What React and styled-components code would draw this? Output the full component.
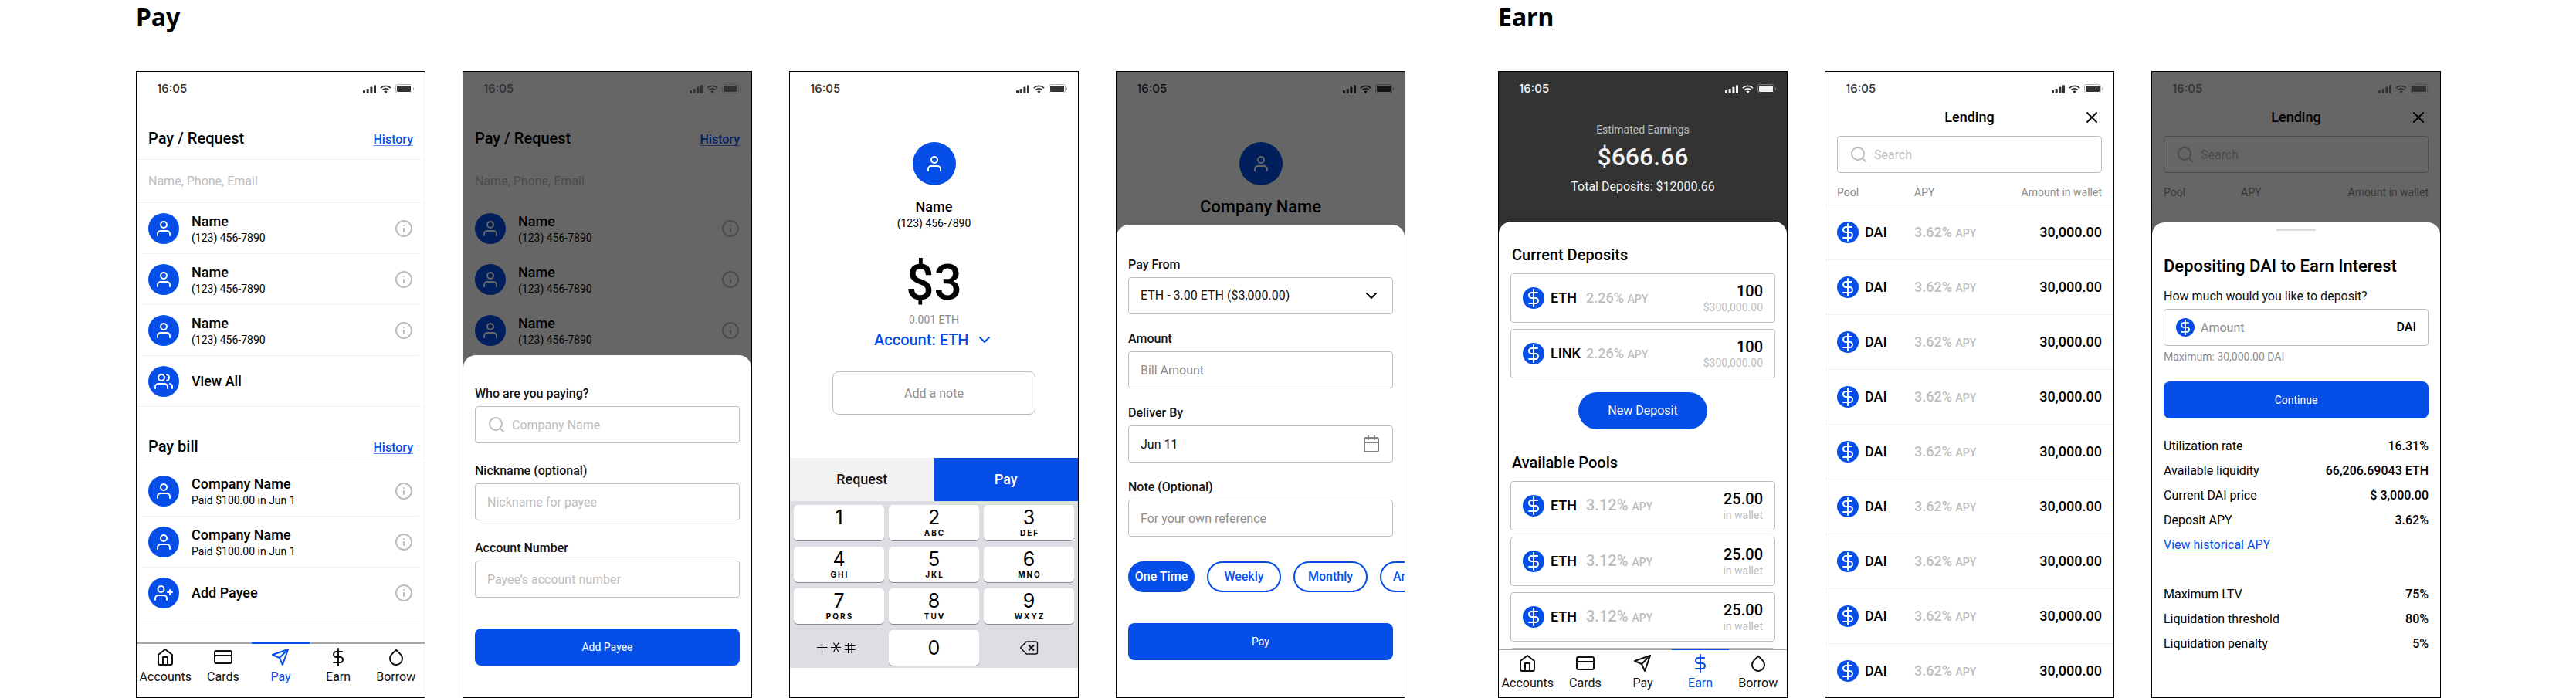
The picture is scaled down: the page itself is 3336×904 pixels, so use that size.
import React, { useId } from "react";
import styled, { createGlobalStyle } from "styled-components";
import {
  FiCalendar,
  FiChevronDown,
  FiCreditCard,
  FiDollarSign,
  FiDroplet,
  FiHome,
  FiInfo,
  FiSearch,
  FiSend,
  FiUser,
  FiUserPlus,
  FiUsers,
  FiX,
} from "react-icons/fi";

const blue = "#054ee8";
const ink = "#111111";
const grey = "#8c8c8c";
const pale = "#bdbdbd";
const hair = "#f2f2f2";

const GlobalStyle = createGlobalStyle`
  *, *::before, *::after { box-sizing: border-box; }
  body { margin: 0; background: #ffffff; color: #000000; font-family: Roboto, "Liberation Sans", sans-serif; font-size: 16px; line-height: 20px; }
  h1, h2, h3, p, ul, dl, dd { margin: 0; padding: 0; }
  ul { list-style: none; }
  button, input, select { font: inherit; color: inherit; margin: 0; }
  button { border: 0; padding: 0; background: none; cursor: pointer; }
  svg { display: block; flex: none; }
`;

/* ---------- board ---------- */

const Board = styled.main`
  display: flex;
  gap: 120px;
  padding: 0 175px 0 176px;
`;

const Flow = styled.section`
  display: flex;
  flex-direction: column;
  flex: ${(p) => `${p.$count} ${p.$count} ${(p.$count - 1) * 48}px`};
  min-width: 0;
`;

const FlowTitle = styled.h1`
  margin-bottom: 48px;
  font-family: "Noto Sans", "Open Sans", sans-serif;
  font-size: 32px;
  font-weight: 700;
  line-height: 44px;
`;

const Screens = styled.div`
  display: flex;
  gap: 48px;
  flex: 1;
`;

const Phone = styled.article`
  position: relative;
  display: flex;
  flex-direction: column;
  flex: 1 1 0;
  min-width: 0;
  min-height: 812px;
  overflow: hidden;
  border: 1px solid #000000;
  background: ${(p) => (p.$dark ? "#333333" : "#ffffff")};
`;

/* ---------- status bar ---------- */

const StatusRow = styled.div`
  position: relative;
  z-index: ${(p) => (p.$raised ? 2 : 0)};
  display: flex;
  flex: none;
  align-items: center;
  justify-content: space-between;
  height: 44px;
  padding: 0 14px 0 26px;
  color: ${(p) => (p.$light ? "#f2f2f2" : "#333333")};
  font-family: Inter, sans-serif;
  font-size: 15px;
  font-weight: 500;
`;

const StatusIcons = styled.div`
  display: flex;
  align-items: center;
  gap: 5px;
`;

function StatusBar({ light, raised }) {
  return (
    <StatusRow $light={light} $raised={raised}>
      <time>16:05</time>
      <StatusIcons aria-hidden="true">
        <svg width="17" height="11" viewBox="0 0 17 11" fill="currentColor">
          <rect x="0" y="7" width="3" height="4" rx="0.8" />
          <rect x="4.7" y="5" width="3" height="6" rx="0.8" />
          <rect x="9.4" y="2.6" width="3" height="8.4" rx="0.8" />
          <rect x="14" y="0.2" width="3" height="10.8" rx="0.8" />
        </svg>
        <svg width="15" height="11" viewBox="0 0 15 11" fill="none" stroke="currentColor" strokeWidth="1.9">
          <path d="M0.9 4.1a9.4 9.4 0 0 1 13.2 0" />
          <path d="M3.3 6.6a6 6 0 0 1 8.4 0" />
          <path d="M5.2 8.6a3.4 3.4 0 0 1 4.6 0L7.5 11z" fill="currentColor" stroke="none" />
        </svg>
        <svg width="24" height="12" viewBox="0 0 24 12" fill="none">
          <rect x="0.5" y="0.5" width="21" height="11" rx="2.6" stroke="currentColor" opacity="0.35" />
          <rect x="2" y="2" width="18" height="8" rx="1.2" fill="currentColor" />
          <path d="M23 4.2v3.8c.8-.3 1.2-1 1.2-1.9S23.800 4.500 23 4.200" fill="currentColor" opacity="0.4" />
        </svg>
      </StatusIcons>
    </StatusRow>
  );
}

/* ---------- shared pieces ---------- */

const Avatar = styled.span`
  display: flex;
  flex: none;
  align-items: center;
  justify-content: center;
  width: ${(p) => (p.$large ? 56 : 40)}px;
  height: ${(p) => (p.$large ? 56 : 40)}px;
  border-radius: 50%;
  background: ${blue};
  color: #ffffff;
`;

const Coin = styled.span`
  display: flex;
  flex: none;
  align-items: center;
  justify-content: center;
  width: ${(p) => p.$size}px;
  height: ${(p) => p.$size}px;
  border-radius: 50%;
  background: ${blue};
  color: #ffffff;
`;

function Token({ size = 28 }) {
  return (
    <Coin $size={size}>
      <FiDollarSign size={size - 4} />
    </Coin>
  );
}

const TextLink = styled.a`
  color: ${blue};
  font-weight: ${(p) => (p.$strong ? 500 : 400)};
  text-decoration: underline 1px #5f8ff5;
  text-decoration-skip-ink: none;
  text-underline-offset: 2px;
`;

const Scrim = styled.div`
  position: absolute;
  inset: 0;
  z-index: 1;
  background: rgba(0, 0, 0, 0.6);
`;

const ModalSheet = styled.form`
  position: absolute;
  right: 0;
  bottom: 0;
  left: 0;
  z-index: 3;
  display: flex;
  flex-direction: column;
  padding: ${(p) => p.$pad};
  border-radius: 16px 16px 0 0;
  background: #ffffff;
`;

const Fields = styled.div`
  display: flex;
  flex-direction: column;
  gap: ${(p) => p.$gap}px;
`;

const FieldGroup = styled.div`
  display: flex;
  flex-direction: column;
  gap: 6px;
`;

const Label = styled.label`
  color: ${ink};
  font-weight: ${(p) => (p.$plain ? 400 : 500)};
`;

const FieldBox = styled.div`
  position: relative;
  display: flex;
  flex: none;
  align-items: center;
  gap: 8px;
  height: 48px;
  padding: 0 15px;
  border: 1px solid ${pale};
  border-radius: 4px;
  color: ${(p) => p.$tone || pale};
`;

const Input = styled.input`
  flex: 1;
  width: 100%;
  min-width: 0;
  height: 24px;
  padding: 0;
  border: 0;
  outline: 0;
  background: transparent;
  color: ${ink};
  text-align: ${(p) => (p.$center ? "center" : "left")};
  &::placeholder {
    color: ${(p) => (p.$strong ? grey : pale)};
    opacity: 1;
  }
`;

const Select = styled.select`
  flex: ${(p) => (p.$inline ? "none" : 1)};
  min-width: 0;
  padding: 0;
  border: 0;
  outline: 0;
  appearance: none;
  background: transparent;
`;

const PrimaryButton = styled.button`
  flex: none;
  height: 48px;
  margin-top: ${(p) => p.$gap}px;
  border-radius: 8px;
  background: ${blue};
  color: #ffffff;
  font-size: 14px;
`;

function Field({ label, icon, trailing, ...input }) {
  const id = useId();
  return (
    <FieldGroup>
      <Label htmlFor={id}>{label}</Label>
      <FieldBox $tone={trailing ? "#808080" : pale}>
        {icon}
        <Input id={id} type="text" {...input} />
        {trailing}
      </FieldBox>
    </FieldGroup>
  );
}

/* ---------- bottom navigation ---------- */

const NavBar = styled.nav`
  display: grid;
  flex: none;
  grid-template-columns: repeat(5, 1fr);
  margin-top: auto;
  background: #ffffff;
`;

const NavItem = styled.a`
  display: flex;
  flex-direction: column;
  align-items: center;
  gap: 4px;
  min-width: 0;
  padding: 5px 0 ${(p) => (p.$compact ? 8 : 16)}px;
  border-top: 2px solid ${(p) => (p.$active ? blue : "#a6a6a6")};
  color: ${(p) => (p.$active ? blue : ink)};
  text-decoration: none;
`;

const tabs = [
  ["Accounts", FiHome],
  ["Cards", FiCreditCard],
  ["Pay", FiSend],
  ["Earn", FiDollarSign],
  ["Borrow", FiDroplet],
];

function Navigation({ current, compact }) {
  return (
    <NavBar aria-label="Main">
      {tabs.map(([name, Icon]) => (
        <NavItem key={name} href={`#${name}`} $active={name === current} $compact={compact}>
          <Icon size={24} />
          <span>{name}</span>
        </NavItem>
      ))}
    </NavBar>
  );
}

/* ---------- pay: contacts ---------- */

const SectionHead = styled.header`
  display: flex;
  align-items: baseline;
  justify-content: space-between;
  padding: ${(p) => (p.$tight ? "39px 15px 9px" : "30px 15px 15px")};
  border-bottom: 1px solid ${hair};
`;

const SectionTitle = styled.h2`
  font-size: 20px;
  font-weight: 500;
  line-height: 24px;
`;

const ContactSearch = styled.div`
  display: flex;
  align-items: center;
  height: 56px;
  padding: 0 15px;
  border-bottom: 1px solid ${hair};
`;

const ContactList = styled.ul`
  padding-top: ${(p) => (p.$spaced ? 3 : 0)}px;
`;

const ContactRow = styled.li`
  display: flex;
  align-items: center;
  gap: 16px;
  margin: 0 ${(p) => (p.$wide ? 0 : 7)}px;
  padding: 12px ${(p) => (p.$wide ? 15 : 8)}px 11px;
  border-bottom: 1px solid ${hair};
`;

const ContactText = styled.div`
  display: flex;
  flex: 1;
  flex-direction: column;
  justify-content: center;
  min-height: 42px;
`;

const StrongName = styled.span`
  font-size: 18px;
  font-weight: 500;
  line-height: 24px;
`;

const SmallText = styled.span`
  color: ${(p) => p.$tone || "inherit"};
  font-size: 14px;
  line-height: 18px;
`;

const InfoButton = styled.button`
  color: ${pale};
`;

function Contact({ name, note, icon: Icon = FiUser, info = true, wide }) {
  return (
    <ContactRow $wide={wide}>
      <Avatar>
        <Icon size={24} />
      </Avatar>
      <ContactText>
        <StrongName>{name}</StrongName>
        {note && <SmallText>{note}</SmallText>}
      </ContactText>
      {info && (
        <InfoButton type="button" aria-label={`About ${name}`}>
          <FiInfo size={24} />
        </InfoButton>
      )}
    </ContactRow>
  );
}

function PayRequest({ children }) {
  return (
    <>
      <SectionHead>
        <SectionTitle>Pay / Request</SectionTitle>
        <TextLink href="#history" $strong>History</TextLink>
      </SectionHead>
      <ContactSearch>
        <Input type="text" aria-label="Find a contact" placeholder="Name, Phone, Email" />
      </ContactSearch>
      <ContactList>
        <Contact name="Name" note="(123) 456-7890" />
        <Contact name="Name" note="(123) 456-7890" />
        <Contact name="Name" note="(123) 456-7890" />
        {children}
      </ContactList>
    </>
  );
}

function PayHome() {
  return (
    <Phone>
      <StatusBar />
      <PayRequest>
        <Contact name="View All" icon={FiUsers} info={false} wide />
      </PayRequest>
      <SectionHead $tight>
        <SectionTitle>Pay bill</SectionTitle>
        <TextLink href="#bills" $strong>History</TextLink>
      </SectionHead>
      <ContactList $spaced>
        <Contact name="Company Name" note="Paid $100.00 in Jun 1" />
        <Contact name="Company Name" note="Paid $100.00 in Jun 1" />
        <Contact name="Add Payee" icon={FiUserPlus} />
      </ContactList>
      <Navigation current="Pay" />
    </Phone>
  );
}

function AddPayee() {
  return (
    <Phone>
      <StatusBar raised />
      <PayRequest />
      <Scrim />
      <ModalSheet $pad="40px 15px 41px">
        <Fields $gap={26}>
          <Field label="Who are you paying?" placeholder="Company Name" icon={<FiSearch size={24} />} />
          <Field label="Nickname (optional)" placeholder="Nickname for payee" />
          <Field label="Account Number" placeholder="Payee’s account number" />
        </Fields>
        <PrimaryButton type="button" $gap={40}>Add Payee</PrimaryButton>
      </ModalSheet>
    </Phone>
  );
}

/* ---------- pay: amount entry ---------- */

const Recipient = styled.div`
  display: flex;
  flex-direction: column;
  align-items: center;
  padding-top: 47px;
`;

const RecipientName = styled.h2`
  margin-top: 16px;
  font-size: ${(p) => (p.$large ? 22 : 18)}px;
  font-weight: 500;
  line-height: 24px;
`;

const Amount = styled.p`
  margin: 33px 0 2px;
  font-size: 64px;
  font-weight: 500;
  line-height: 72px;
`;

const AccountPicker = styled.label`
  display: flex;
  align-items: center;
  gap: 8px;
  margin-top: 5px;
  color: ${blue};
  font-size: 20px;
  font-weight: 500;
  line-height: 24px;
`;

const NoteBox = styled.div`
  display: flex;
  align-items: center;
  height: 56px;
  margin: 29px 55px 56px;
  padding: 0 15px;
  border: 1px solid ${pale};
  border-radius: 8px;
`;

const ModeSwitch = styled.div`
  display: grid;
  grid-template-columns: 1fr 1fr;
`;

const ModeButton = styled.button`
  height: 56px;
  background: ${(p) => (p.$active ? blue : hair)};
  color: ${(p) => (p.$active ? "#ffffff" : ink)};
  font-size: 18px;
  font-weight: 500;
`;

const Keypad = styled.div`
  display: grid;
  grid-template-columns: repeat(3, 1fr);
  gap: 8px 6px;
  padding: 5px 5px 3px;
  background: #dcdee3;
  font-family: Inter, sans-serif;
`;

const Key = styled.button`
  display: flex;
  flex-direction: column;
  align-items: center;
  justify-content: ${(p) => (p.$lone ? "center" : "flex-start")};
  height: 46px;
  padding-top: ${(p) => (p.$lone ? 0 : 2)}px;
  border-radius: 5px;
  background: ${(p) => (p.$bare ? "transparent" : "#ffffff")};
  box-shadow: ${(p) => (p.$bare ? "none" : "0 1px 0 #898a8d")};
  font-size: 25px;
  line-height: 28px;
`;

const KeyLetters = styled.span`
  padding-left: 2px;
  font-size: 10px;
  font-weight: 700;
  line-height: 12px;
  letter-spacing: 2px;
`;

const keys = [
  ["1", ""],
  ["2", "ABC"],
  ["3", "DEF"],
  ["4", "GHI"],
  ["5", "JKL"],
  ["6", "MNO"],
  ["7", "PQRS"],
  ["8", "TUV"],
  ["9", "WXYZ"],
];

function PayAmount() {
  return (
    <Phone>
      <StatusBar />
      <Recipient>
        <Avatar $large>
          <FiUser size={24} />
        </Avatar>
        <RecipientName>Name</RecipientName>
        <SmallText>(123) 456-7890</SmallText>
        <Amount>$3</Amount>
        <SmallText $tone={grey}>0.001 ETH</SmallText>
        <AccountPicker>
          <Select $inline aria-label="Account">
            <option>Account: ETH</option>
          </Select>
          <FiChevronDown size={24} />
        </AccountPicker>
      </Recipient>
      <NoteBox>
        <Input type="text" aria-label="Note" placeholder="Add a note" $center $strong />
      </NoteBox>
      <ModeSwitch>
        <ModeButton type="button">Request</ModeButton>
        <ModeButton type="button" $active>Pay</ModeButton>
      </ModeSwitch>
      <Keypad>
        {keys.map(([digit, letters]) => (
          <Key key={digit} type="button">
            {digit}
            {letters && <KeyLetters>{letters}</KeyLetters>}
          </Key>
        ))}
        <Key type="button" $bare $lone aria-label="Symbols">
          <svg width="58" height="16" viewBox="0 0 58 16" fill="none" stroke="#000000" strokeWidth="1.1">
            <path d="M0 7.500h13.500M6.500 1v13.500M18 7.500h13M21.500 1.500l6.500 12M28 1.500l-6.500 12" />
            <path d="M36 5.500h13.500M36 10.500h13.500M40.500 2v13M45 2v13" />
          </svg>
        </Key>
        <Key type="button" $lone>0</Key>
        <Key type="button" $bare $lone aria-label="Delete">
          <svg width="24" height="18" viewBox="0 0 24 18" fill="none" stroke="#111111" strokeWidth="1.4">
            <path d="M8.200 1h12.300a2 2 0 0 1 2 2v12a2 2 0 0 1-2 2H8.200L1 9.600a.9.9 0 0 1 0-1.200z" strokeLinejoin="round" />
            <path d="M11.200 5.500l6.800 7M18 5.500l-6.800 7" strokeWidth="1.900" />
          </svg>
        </Key>
      </Keypad>
    </Phone>
  );
}

/* ---------- pay: bill form ---------- */

const ChipRow = styled.div`
  display: flex;
  gap: 16px;
  margin: 32px -15px 0 0;
  overflow: hidden;
`;

const Chip = styled.button`
  flex: none;
  width: ${(p) => (p.$active ? 86 : 96)}px;
  height: 40px;
  border: 2px solid ${blue};
  border-radius: 20px;
  background: ${(p) => (p.$active ? blue : "#ffffff")};
  color: ${(p) => (p.$active ? "#ffffff" : blue)};
  font-weight: 500;
`;

function PayBill() {
  const from = useId();
  return (
    <Phone>
      <StatusBar />
      <Recipient>
        <Avatar $large>
          <FiUser size={24} />
        </Avatar>
        <RecipientName $large>Company Name</RecipientName>
      </Recipient>
      <Scrim />
      <ModalSheet $pad="42px 15px 48px">
        <Fields $gap={22}>
          <FieldGroup>
            <Label htmlFor={from}>Pay From</Label>
            <FieldBox $tone={ink}>
              <Select id={from}>
                <option>ETH - 3.00 ETH ($3,000.00)</option>
              </Select>
              <FiChevronDown size={24} />
            </FieldBox>
          </FieldGroup>
          <Field label="Amount" placeholder="Bill Amount" $strong />
          <Field label="Deliver By" defaultValue="Jun 11" trailing={<FiCalendar size={24} />} />
          <Field label="Note (Optional)" placeholder="For your own reference" $strong />
        </Fields>
        <ChipRow>
          <Chip type="button" $active>One Time</Chip>
          <Chip type="button">Weekly</Chip>
          <Chip type="button">Monthly</Chip>
          <Chip type="button">Annually</Chip>
        </ChipRow>
        <PrimaryButton type="button" $gap={40}>Pay</PrimaryButton>
      </ModalSheet>
    </Phone>
  );
}

/* ---------- earn: overview ---------- */

const Summary = styled.header`
  display: flex;
  flex: none;
  flex-direction: column;
  align-items: center;
  padding: 22px 15px 35px;
  color: #f2f2f2;
`;

const Earnings = styled.p`
  margin: 6px 0 9px;
  font-size: 32px;
  font-weight: 500;
  line-height: 40px;
`;

const EarnPanel = styled.div`
  display: flex;
  flex: 1 1 0;
  flex-direction: column;
  min-height: 0;
  padding: 31px 15px 0;
  overflow: hidden;
  border-radius: 16px 16px 0 0;
  background: #ffffff;
  box-shadow: 0 -2px 12px rgba(0, 0, 0, 0.12);
`;

const PanelTitle = styled(SectionTitle)`
  margin: ${(p) => (p.$second ? 31 : 0)}px 2px 12px;
`;

const CardList = styled.ul`
  display: flex;
  flex: none;
  flex-direction: column;
  gap: 8px;
`;

const AssetCard = styled.li`
  display: flex;
  align-items: center;
  gap: 8px;
  height: 64px;
  padding: 0 15px;
  border: 1px solid ${pale};
  border-radius: 4px;
`;

const AssetLine = styled.div`
  display: flex;
  flex: 1;
  align-items: baseline;
  font-size: 18px;
  font-weight: 500;
  line-height: 24px;
`;

const AssetName = styled.span`
  min-width: 46px;
`;

const Rate = styled.span`
  color: ${pale};
  font-size: ${(p) => (p.$large ? 20 : 18)}px;
  font-weight: 500;
  line-height: 24px;
`;

const RateUnit = styled.small`
  font-size: 14px;
`;

const Holding = styled.div`
  display: flex;
  flex-direction: column;
  align-items: flex-end;
`;

const HoldingValue = styled.span`
  font-size: 20px;
  font-weight: 500;
  line-height: 24px;
`;

const PillButton = styled.button`
  flex: none;
  align-self: center;
  height: 48px;
  margin-top: 18px;
  padding: 0 38px;
  border-radius: 24px;
  background: ${blue};
  color: #ffffff;
`;

function Asset({ name, rate, value, note, large }) {
  return (
    <AssetCard>
      <Token />
      <AssetLine>
        <AssetName>{name}</AssetName>
        <Rate $large={large}>
          {rate} <RateUnit>APY</RateUnit>
        </Rate>
      </AssetLine>
      <Holding>
        <HoldingValue>{value}</HoldingValue>
        <SmallText $tone={pale}>{note}</SmallText>
      </Holding>
    </AssetCard>
  );
}

function EarnHome() {
  return (
    <Phone $dark>
      <StatusBar light />
      <Summary>
        <SmallText $tone={pale}>Estimated Earnings</SmallText>
        <Earnings>$666.66</Earnings>
        <p>Total Deposits: $12000.66</p>
      </Summary>
      <EarnPanel>
        <PanelTitle>Current Deposits</PanelTitle>
        <CardList>
          <Asset name="ETH" rate="2.26%" value="100" note="$300,000.00" />
          <Asset name="LINK" rate="2.26%" value="100" note="$300,000.00" />
        </CardList>
        <PillButton type="button">New Deposit</PillButton>
        <PanelTitle $second>Available Pools</PanelTitle>
        <CardList>
          {[1, 2, 3, 4].map((n) => (
            <Asset key={n} name="ETH" rate="3.12%" value="25.00" note="in wallet" large />
          ))}
        </CardList>
      </EarnPanel>
      <Navigation current="Earn" compact />
    </Phone>
  );
}

/* ---------- earn: lending ---------- */

const ScreenHead = styled.header`
  display: grid;
  flex: none;
  grid-template-columns: 24px 1fr 24px;
  align-items: center;
  padding: 3px 16px 12px;
  text-align: center;
`;

const ScreenTitle = styled.h2`
  grid-column: 2;
  font-size: 18px;
  font-weight: 500;
  line-height: 24px;
`;

const SearchSlot = styled.div`
  flex: none;
  padding: 0 15px;
`;

const PoolArea = styled.div`
  flex: 1 1 0;
  min-height: 0;
  overflow: hidden;
`;

const PoolTable = styled.table`
  width: 100%;
  table-layout: fixed;
  border-collapse: separate;
  border-spacing: 0;
`;

const PoolHead = styled.th`
  width: ${(p) => p.$width || "auto"};
  height: 42px;
  padding: ${(p) => p.$pad || "16px 0 7px"};
  border-bottom: 1px solid ${hair};
  color: ${grey};
  font-size: 14px;
  font-weight: 400;
  line-height: 18px;
  text-align: ${(p) => (p.$end ? "right" : "left")};
`;

const PoolCell = styled.td`
  height: 71px;
  padding: ${(p) => p.$pad || 0};
  border-bottom: 1px solid ${hair};
  font-size: 18px;
  font-weight: 500;
  line-height: 24px;
  text-align: ${(p) => (p.$end ? "right" : "left")};
`;

const PoolName = styled.div`
  display: flex;
  align-items: center;
  gap: 8px;
`;

function Lending({ rows }) {
  return (
    <>
      <ScreenHead>
        <ScreenTitle>Lending</ScreenTitle>
        <button type="button" aria-label="Close">
          <FiX size={24} />
        </button>
      </ScreenHead>
      <SearchSlot>
        <FieldBox>
          <FiSearch size={24} />
          <Input type="search" aria-label="Search pools" placeholder="Search" />
        </FieldBox>
      </SearchSlot>
      <PoolArea>
        <PoolTable>
          <thead>
            <tr>
              <PoolHead $width="115px" $pad="16px 0 7px 15px">Pool</PoolHead>
              <PoolHead>APY</PoolHead>
              <PoolHead $end $pad="16px 15px 7px 0">Amount in wallet</PoolHead>
            </tr>
          </thead>
          <tbody>
            {Array.from({ length: rows }, (_, i) => (
              <tr key={i}>
                <PoolCell $pad="0 0 0 15px">
                  <PoolName>
                    <Token />
                    DAI
                  </PoolName>
                </PoolCell>
                <PoolCell>
                  <Rate>
                    3.62% <RateUnit>APY</RateUnit>
                  </Rate>
                </PoolCell>
                <PoolCell $end $pad="0 15px 0 0">30,000.00</PoolCell>
              </tr>
            ))}
          </tbody>
        </PoolTable>
      </PoolArea>
    </>
  );
}

function LendingList() {
  return (
    <Phone>
      <StatusBar />
      <Lending rows={9} />
    </Phone>
  );
}

/* ---------- earn: deposit ---------- */

const Handle = styled.span`
  align-self: center;
  width: 51px;
  height: 3px;
  border-radius: 2px;
  background: #dcdcdc;
`;

const SheetTitle = styled.h2`
  margin: 32px 0 15px;
  font-size: 22px;
  font-weight: 500;
  line-height: 28px;
`;

const Unit = styled.span`
  color: #000000;
  font-weight: 500;
`;

const Hint = styled.p`
  margin-top: 5px;
  color: ${grey};
  font-size: 14px;
  line-height: 18px;
`;

const Facts = styled.dl`
  margin-top: ${(p) => p.$gap}px;
  line-height: 32px;
`;

const Fact = styled.div`
  display: flex;
  justify-content: space-between;
`;

const FactValue = styled.dd`
  font-weight: 500;
`;

const LinkLine = styled.p`
  line-height: 32px;
`;

function FactList({ items, gap }) {
  return (
    <Facts $gap={gap}>
      {items.map(([term, value]) => (
        <Fact key={term}>
          <dt>{term}</dt>
          <FactValue>{value}</FactValue>
        </Fact>
      ))}
    </Facts>
  );
}

const marketFacts = [
  ["Utilization rate", "16.31%"],
  ["Available liquidity", "66,206.69043 ETH"],
  ["Current DAI price", "$ 3,000.00"],
  ["Deposit APY", "3.62%"],
];

const riskFacts = [
  ["Maximum LTV", "75%"],
  ["Liquidation threshold", "80%"],
  ["Liquidation penalty", "5%"],
];

function Deposit() {
  const amount = useId();
  return (
    <Phone>
      <StatusBar raised />
      <Lending rows={0} />
      <Scrim />
      <ModalSheet $pad="8px 15px 53px">
        <Handle />
        <SheetTitle>Depositing DAI to Earn Interest</SheetTitle>
        <FieldGroup>
          <Label htmlFor={amount} $plain>How much would you like to deposit?</Label>
          <FieldBox>
            <Token size={24} />
            <Input id={amount} type="text" placeholder="Amount" $strong />
            <Unit>DAI</Unit>
          </FieldBox>
        </FieldGroup>
        <Hint>Maximum: 30,000.00 DAI</Hint>
        <PrimaryButton type="button" $gap={23}>Continue</PrimaryButton>
        <FactList items={marketFacts} gap={20} />
        <LinkLine>
          <TextLink href="#historical-apy">View historical APY</TextLink>
        </LinkLine>
        <FactList items={riskFacts} gap={32} />
      </ModalSheet>
    </Phone>
  );
}

export default function App() {
  return (
    <>
      <GlobalStyle />
      <Board>
        <Flow $count={4}>
          <FlowTitle>Pay</FlowTitle>
          <Screens>
            <PayHome />
            <AddPayee />
            <PayAmount />
            <PayBill />
          </Screens>
        </Flow>
        <Flow $count={3}>
          <FlowTitle>Earn</FlowTitle>
          <Screens>
            <EarnHome />
            <LendingList />
            <Deposit />
          </Screens>
        </Flow>
      </Board>
    </>
  );
}
